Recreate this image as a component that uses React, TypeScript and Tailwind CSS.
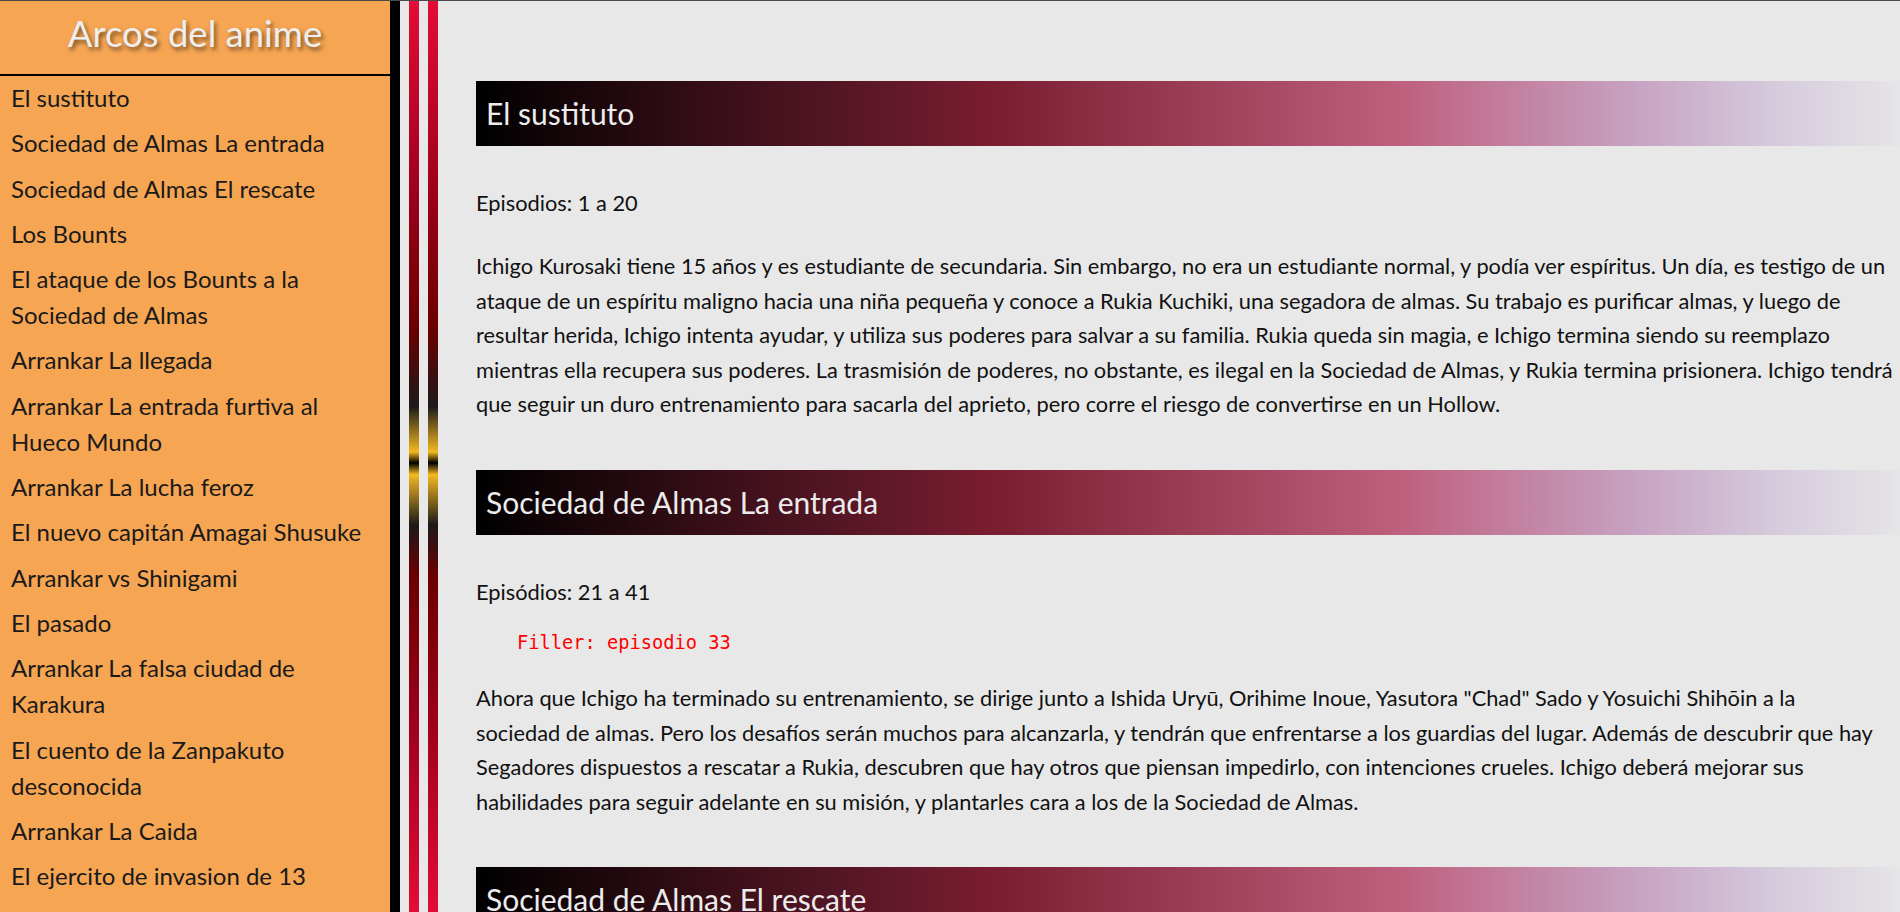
import React from "react";

type Section = {
  title: string;
  episodes: string;
  filler?: string;
  lines: string[];
};

const arcs: string[][] = [
  ["El sustituto"],
  ["Sociedad de Almas La entrada"],
  ["Sociedad de Almas El rescate"],
  ["Los Bounts"],
  ["El ataque de los Bounts a la", "Sociedad de Almas"],
  ["Arrankar La llegada"],
  ["Arrankar La entrada furtiva al", "Hueco Mundo"],
  ["Arrankar La lucha feroz"],
  ["El nuevo capitán Amagai Shusuke"],
  ["Arrankar vs Shinigami"],
  ["El pasado"],
  ["Arrankar La falsa ciudad de", "Karakura"],
  ["El cuento de la Zanpakuto", "desconocida"],
  ["Arrankar La Caida"],
  ["El ejercito de invasion de 13"],
];

const sections: Section[] = [
  {
    title: "El sustituto",
    episodes: "Episodios: 1 a 20",
    lines: [
      "Ichigo Kurosaki tiene 15 años y es estudiante de secundaria. Sin embargo, no era un estudiante normal, y podía ver espíritus. Un día, es testigo de un",
      "ataque de un espíritu maligno hacia una niña pequeña y conoce a Rukia Kuchiki, una segadora de almas. Su trabajo es purificar almas, y luego de",
      "resultar herida, Ichigo intenta ayudar, y utiliza sus poderes para salvar a su familia. Rukia queda sin magia, e Ichigo termina siendo su reemplazo",
      "mientras ella recupera sus poderes. La trasmisión de poderes, no obstante, es ilegal en la Sociedad de Almas, y Rukia termina prisionera. Ichigo tendrá",
      "que seguir un duro entrenamiento para sacarla del aprieto, pero corre el riesgo de convertirse en un Hollow.",
    ],
  },
  {
    title: "Sociedad de Almas La entrada",
    episodes: "Episódios: 21 a 41",
    filler: "Filler: episodio 33",
    lines: [
      "Ahora que Ichigo ha terminado su entrenamiento, se dirige junto a Ishida Uryū, Orihime Inoue, Yasutora \"Chad\" Sado y Yosuichi Shihōin a la",
      "sociedad de almas. Pero los desafíos serán muchos para alcanzarla, y tendrán que enfrentarse a los guardias del lugar. Además de descubrir que hay",
      "Segadores dispuestos a rescatar a Rukia, descubren que hay otros que piensan impedirlo, con intenciones crueles. Ichigo deberá mejorar sus",
      "habilidades para seguir adelante en su misión, y plantarles cara a los de la Sociedad de Almas.",
    ],
  },
  {
    title: "Sociedad de Almas El rescate",
    episodes: "Episodios: 42 a 63",
    lines: [
      "Ichigo y sus amigos se adentran en el Seireitei para rescatar a Rukia antes de su ejecución.",
    ],
  },
];

function Stripe() {
  return (
    <div className="w-[10px] h-full bg-[linear-gradient(to_bottom,#e30c36_0%,#9a0018_22%,#6a0000_36%,#1c1a1a_44.5%,#f4b820_49.5%,#000_50.7%,#f4b820_52%,#1c1a1a_57.5%,#6a0000_63%,#9a0018_78%,#e30c36_100%)]" />
  );
}

export default function App() {
  return (
    <div className="h-screen w-full overflow-hidden flex border-t border-[#4a4a4a] bg-[#e8e8e8] font-['Lato',sans-serif]">
      <aside className="w-[400px] shrink-0 h-full bg-[#f6a552] border-r-[10px] border-black">
        <div className="h-[75px] border-b-2 border-black pt-[13px] text-center">
          <h1 className="text-[36.5px] leading-[38px] text-[#eeeeee] [text-shadow:2px_3px_4px_rgba(0,0,0,0.55)]">
            Arcos del anime
          </h1>
        </div>
        <ul className="pt-[4px] pl-[11px]">
          {arcs.map((arc, i) => (
            <li key={i} className="mb-[9.3px] text-[24px] leading-[36px] text-[#1a1a1a] whitespace-nowrap">
              {arc.map((line, j) => (
                <span key={j} className="block">
                  {line}
                </span>
              ))}
            </li>
          ))}
        </ul>
      </aside>

      <div className="flex gap-[9px] pl-[9px] h-full shrink-0">
        <Stripe />
        <Stripe />
      </div>

      <main className="shrink-0 w-[1478px] pl-[38px] pt-[80px]">
        {sections.map((s, i) => (
          <section key={i} className={i > 0 ? "mt-[48px]" : ""}>
            <h2 className="h-[65px] flex items-center pl-[10px] text-[30px] text-[#ececec] bg-[linear-gradient(to_right,#000_0%,#5e1828_28%,#7b1d31_36%,#be5f7d_64%,#c8a4c4_81%,#d5cadc_90%,transparent_100%)]">
              {s.title}
            </h2>
            <p className="mt-[40px] text-[21.8px] leading-[34.5px] text-[#111]">{s.episodes}</p>
            {s.filler && (
              <pre className="mt-[23px] ml-[41px] text-[18.7px] leading-[22px] text-[#ff0000] font-['DejaVu_Sans_Mono',monospace]">
                {s.filler}
              </pre>
            )}
            <p
              className={`${s.filler ? "mt-[27px]" : "mt-[28.5px]"} text-[21.8px] leading-[34.5px] text-[#111] whitespace-nowrap`}
            >
              {s.lines.map((line, j) => (
                <span key={j} className="block">
                  {line}
                </span>
              ))}
            </p>
          </section>
        ))}
      </main>
    </div>
  );
}
